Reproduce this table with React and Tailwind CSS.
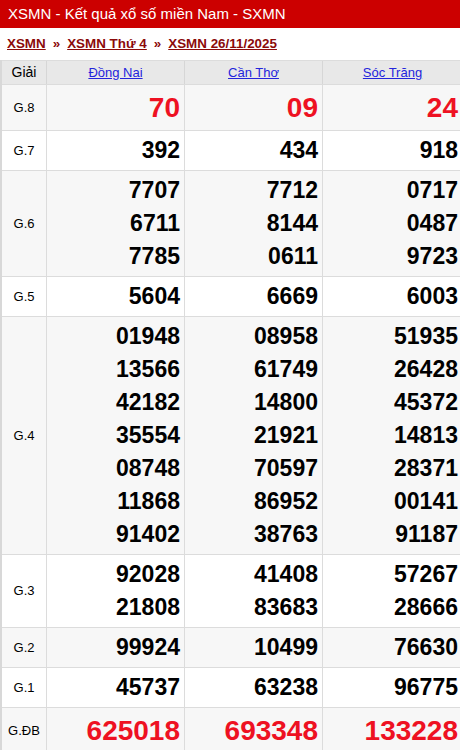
import React from 'react';

// --- XSMN RESULT TABLE ---

const provinces = ['Đồng Nai', 'Cần Thơ', 'Sóc Trăng'];

const prizes = [
  { name: 'G.8', big: true, values: [['70'], ['09'], ['24']] },
  { name: 'G.7', values: [['392'], ['434'], ['918']] },
  { name: 'G.6', values: [['7707', '6711', '7785'], ['7712', '8144', '0611'], ['0717', '0487', '9723']] },
  { name: 'G.5', values: [['5604'], ['6669'], ['6003']] },
  {
    name: 'G.4',
    values: [
      ['01948', '13566', '42182', '35554', '08748', '11868', '91402'],
      ['08958', '61749', '14800', '21921', '70597', '86952', '38763'],
      ['51935', '26428', '45372', '14813', '28371', '00141', '91187'],
    ],
  },
  { name: 'G.3', values: [['92028', '21808'], ['41408', '83683'], ['57267', '28666']] },
  { name: 'G.2', values: [['99924'], ['10499'], ['76630']] },
  { name: 'G.1', values: [['45737'], ['63238'], ['96775']] },
  { name: 'G.ĐB', big: true, values: [['625018'], ['693348'], ['133228']] },
];

const App = () => {
  return (
    <div className="w-[460px] h-[750px] overflow-hidden bg-white font-['Liberation_Sans',Arial,sans-serif]">
      <div className="h-[28px] bg-[#cc0000] text-white text-[15px] leading-[28px] px-[8px]">
        XSMN - Kết quả xổ số miền Nam - SXMN
      </div>

      <div className="h-[32px] flex items-center px-[7px] text-[13.4px] font-bold text-[#8b0a0a]">
        <span className="underline">XSMN</span>
        <span className="mx-[7px]">»</span>
        <span className="underline">XSMN Thứ 4</span>
        <span className="mx-[7px]">»</span>
        <span className="underline">XSMN 26/11/2025</span>
      </div>

      <div className="w-[462px] border-l-2 border-[#d8d8d8]">
        <div className="grid grid-cols-[44px_138px_138px_140px] bg-[#e8e8e8] border-t border-[#dcdcdc] h-[24px] text-[13px] leading-[23px]">
          <div className="text-center text-[14px] text-black">Giải</div>
          {provinces.map((p) => (
            <div key={p} className="text-center border-l border-[#d6d6d6]">
              <span className="underline text-[#2424dc]">{p}</span>
            </div>
          ))}
        </div>

        {prizes.map((row, i) => (
          <div
            key={row.name}
            className={`grid grid-cols-[44px_138px_138px_140px] border-t border-[#dcdcdc] ${i % 2 === 0 ? 'bg-[#f7f7f7]' : 'bg-white'}`}
          >
            <div className="flex items-center justify-center text-[13px] text-black">{row.name}</div>
            {row.values.map((col, j) => (
              <div key={j} className="border-l border-[#dcdcdc] py-[3px] pr-[4px] text-right font-bold">
                {col.map((v) => (
                  <div
                    key={v}
                    className={
                      row.big
                        ? 'text-[28px] leading-[39px] text-[#ee1122]'
                        : 'text-[23px] leading-[33px] text-black'
                    }
                  >
                    {v}
                  </div>
                ))}
              </div>
            ))}
          </div>
        ))}
      </div>
    </div>
  );
};

export default App;
